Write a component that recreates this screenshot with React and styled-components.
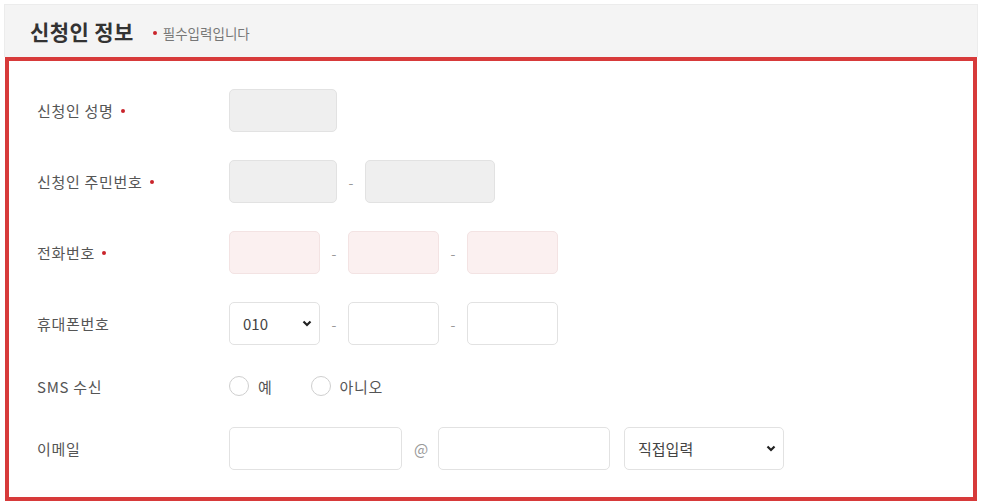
import React from 'react';
import styled, { createGlobalStyle } from 'styled-components';

const GlobalStyle = createGlobalStyle`
  body {
    margin: 0;
    background: #fff;
    font-family: "Noto Sans CJK KR", "Noto Sans", sans-serif;
  }
`;

const Page = styled.div`
  width: 974px;
  padding: 4px 0 0 4px;
`;

const Header = styled.div`
  height: 52px;
  background: #f4f4f4;
  border: 1px solid #ececec;
  border-bottom: none;
  display: flex;
  align-items: center;
  padding-left: 25px;
  gap: 19px;
`;

const Title = styled.h2`
  margin: 0;
  font-size: 21px;
  font-weight: 700;
  color: #333;
  letter-spacing: 0.4px;
`;

const Note = styled.span`
  font-size: 13.5px;
  color: #777;
  display: flex;
  align-items: center;
  gap: 6px;
  margin-top: 4px;
`;

const Dot = styled.i`
  display: inline-block;
  width: 4px;
  height: 4px;
  border-radius: 50%;
  background: #c9242b;
  margin-left: ${(p) => p.$ml || 0}px;
`;

const FormBox = styled.div`
  box-sizing: border-box;
  margin-left: 1px;
  width: 972px;
  border: 4px solid #d73a3a;
  padding: 28px 0 27px 28px;
  display: flex;
  flex-direction: column;
  gap: 28px;
`;

const Row = styled.div`
  display: flex;
  align-items: center;
  height: ${(p) => p.$h || 43}px;
`;

const Label = styled.div`
  width: 192px;
  font-size: 15px;
  letter-spacing: 0.7px;
  color: #555;
  display: flex;
  align-items: center;
`;

const Fields = styled.div`
  display: flex;
  align-items: center;
  gap: ${(p) => p.$gap || 10}px;
`;

const Input = styled.input`
  box-sizing: border-box;
  width: ${(p) => p.$w}px;
  height: 43px;
  border: 1px solid ${(p) => (p.$tone === 'pink' ? '#f3e3e3' : '#e2e2e2')};
  border-radius: 5px;
  background: ${(p) =>
    p.$tone === 'gray' ? '#efefef' : p.$tone === 'pink' ? '#fbf0f0' : '#fff'};
  outline: none;
  font-family: inherit;
`;

const Sep = styled.span`
  width: ${(p) => p.$w || 8}px;
  text-align: center;
  color: #999;
  font-size: ${(p) => p.$fs || 14}px;
`;

const SelectWrap = styled.div`
  position: relative;
  width: ${(p) => p.$w}px;
  height: 43px;
  margin-left: ${(p) => p.$ml || 0}px;
`;

const Select = styled.select`
  box-sizing: border-box;
  width: 100%;
  height: 100%;
  appearance: none;
  border: 1px solid #e2e2e2;
  border-radius: 5px;
  background: #fff;
  padding-left: 13px;
  font-family: inherit;
  font-size: 15px;
  color: #444;
  outline: none;
`;

const Chevron = styled.svg`
  position: absolute;
  right: 8px;
  top: 18px;
  pointer-events: none;
`;

const RadioGroup = styled.label`
  display: flex;
  align-items: center;
  gap: 9px;
  font-size: 15px;
  letter-spacing: 0.7px;
  color: #555;
  margin-right: 28px;
`;

const Radio = styled.input`
  appearance: none;
  margin: 0;
  width: 20px;
  height: 20px;
  border: 1px solid #cfcfcf;
  border-radius: 50%;
  background: #fff;
`;

const Arrow = () => (
  <Chevron width="10" height="7" viewBox="0 0 10 7">
    <path d="M1.5 1.5 L5 5 L8.5 1.5" fill="none" stroke="#222" strokeWidth="2.2" />
  </Chevron>
);

const Required = ({ children }) => (
  <Label>
    {children}
    <Dot $ml={7} />
  </Label>
);

export default function App() {
  return (
    <>
      <GlobalStyle />
      <Page>
        <Header>
          <Title>신청인 정보</Title>
          <Note>
            <Dot />
            필수입력입니다
          </Note>
        </Header>
        <FormBox>
          <Row>
            <Required>신청인 성명</Required>
            <Fields>
              <Input $w={108} $tone="gray" />
            </Fields>
          </Row>
          <Row>
            <Required>신청인 주민번호</Required>
            <Fields>
              <Input $w={108} $tone="gray" />
              <Sep>-</Sep>
              <Input $w={130} $tone="gray" />
            </Fields>
          </Row>
          <Row>
            <Required>전화번호</Required>
            <Fields>
              <Input $w={91} $tone="pink" />
              <Sep>-</Sep>
              <Input $w={91} $tone="pink" />
              <Sep>-</Sep>
              <Input $w={91} $tone="pink" />
            </Fields>
          </Row>
          <Row>
            <Label>휴대폰번호</Label>
            <Fields>
              <SelectWrap $w={91}>
                <Select defaultValue="010">
                  <option>010</option>
                  <option>011</option>
                  <option>016</option>
                </Select>
                <Arrow />
              </SelectWrap>
              <Sep>-</Sep>
              <Input $w={91} />
              <Sep>-</Sep>
              <Input $w={91} />
            </Fields>
          </Row>
          <Row $h={26}>
            <Label>SMS 수신</Label>
            <Fields $gap={0}>
              <RadioGroup>
                <Radio type="radio" name="sms" />예
              </RadioGroup>
              <RadioGroup>
                <Radio type="radio" name="sms" />아니오
              </RadioGroup>
            </Fields>
          </Row>
          <Row>
            <Label>이메일</Label>
            <Fields $gap={12}>
              <Input $w={173} />
              <Sep $w={12} $fs={15}>@</Sep>
              <Input $w={172} />
              <SelectWrap $w={160} $ml={2}>
                <Select defaultValue="직접입력">
                  <option>직접입력</option>
                  <option>naver.com</option>
                  <option>gmail.com</option>
                </Select>
                <Arrow />
              </SelectWrap>
            </Fields>
          </Row>
        </FormBox>
      </Page>
    </>
  );
}
